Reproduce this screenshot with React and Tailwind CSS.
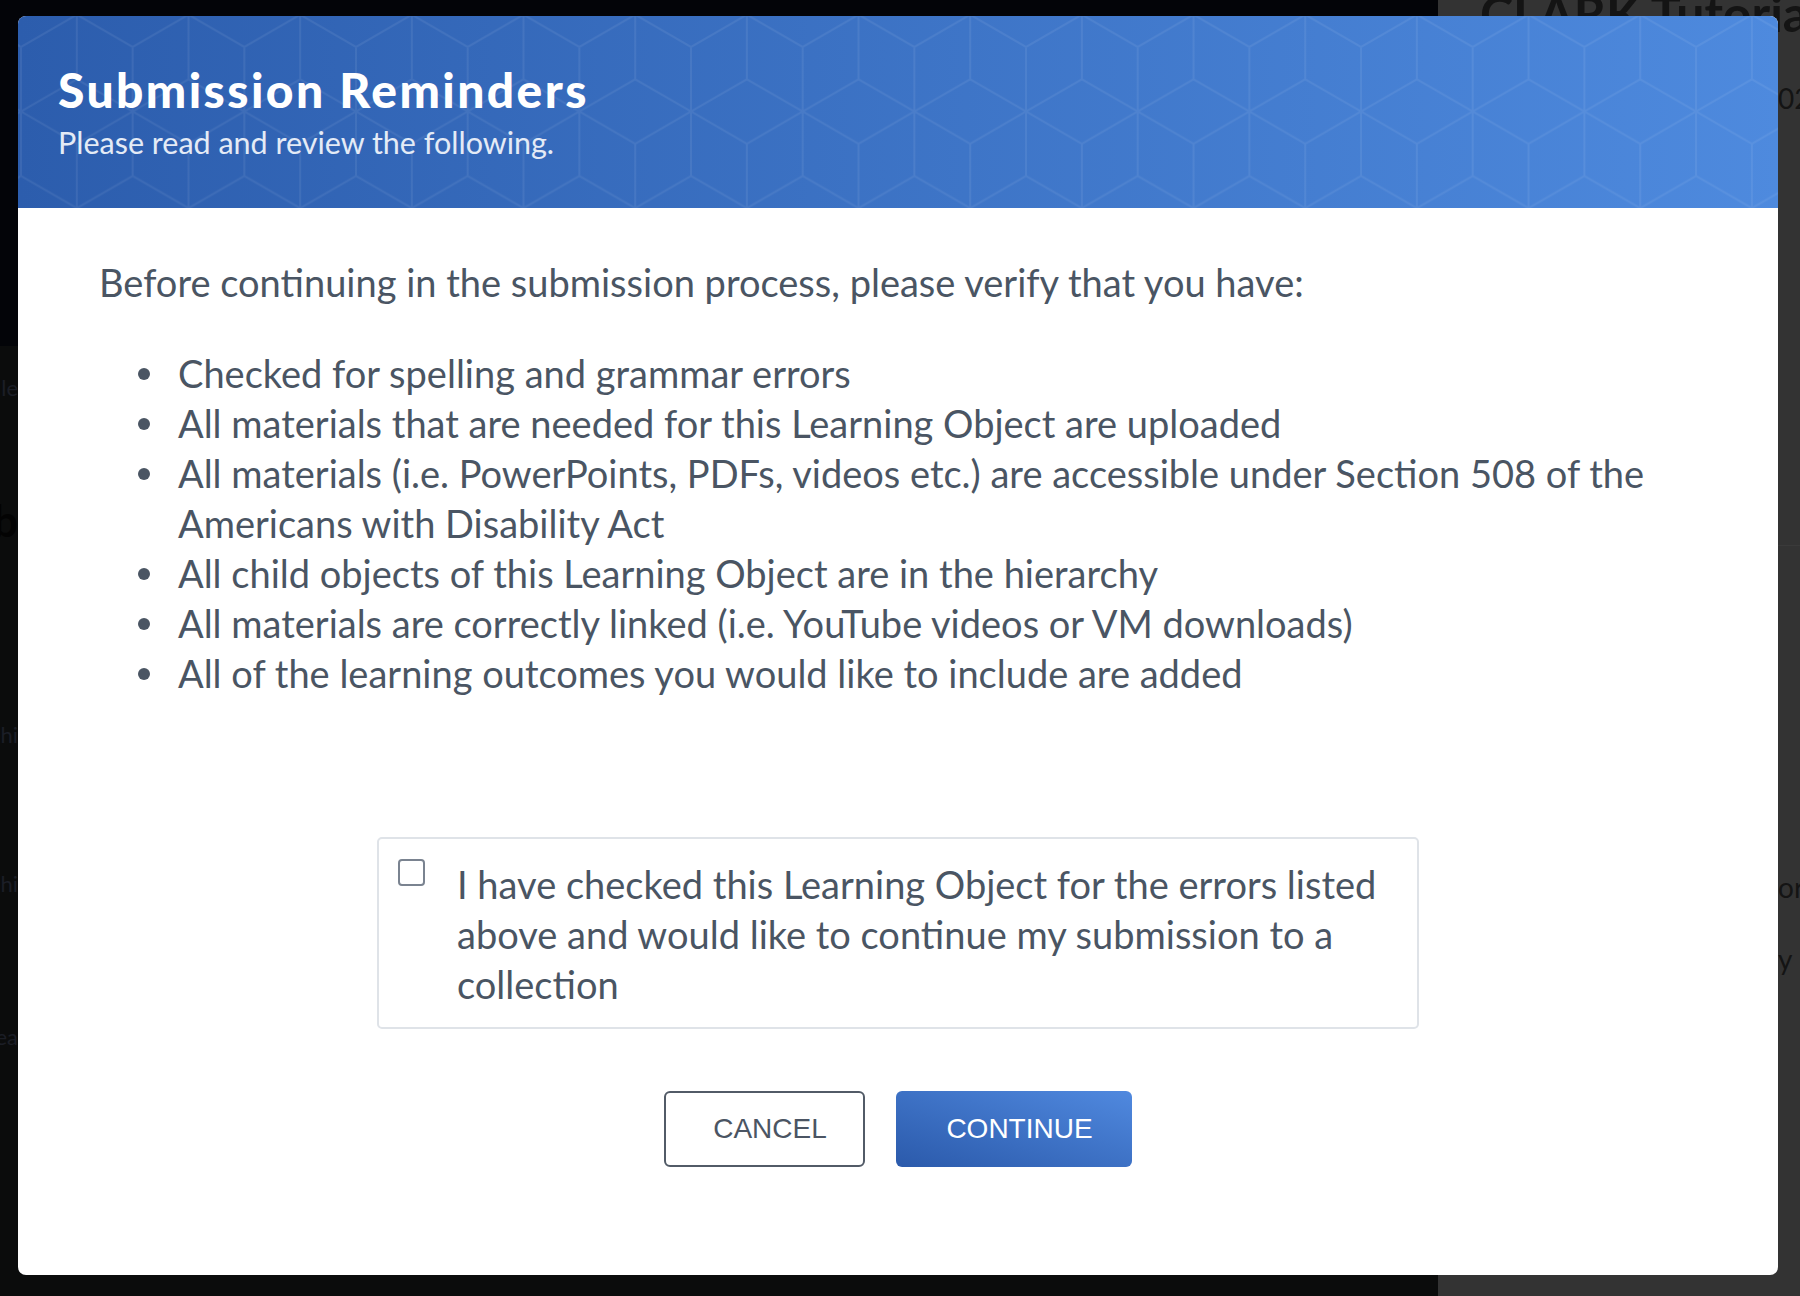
import React from 'react';

// hex "cube" pattern for the header
const W = 111.67;
const S = 64.47;
const centers = [[0, 0], [W, 0], [W / 2, 1.5 * S], [0, 3 * S], [W, 3 * S]];
const hexPath = centers
    .map(([cx, cy]) => {
        const h = W / 2;
        return `M${cx},${cy - S} L${cx + h},${cy - S / 2} L${cx + h},${cy + S / 2} L${cx},${cy + S} L${cx - h},${cy + S / 2} L${cx - h},${cy - S / 2} Z M${cx - h},${cy - S / 2} L${cx},${cy} L${cx + h},${cy - S / 2} M${cx},${cy} L${cx},${cy + S}`;
    })
    .join(' ');

const items = [
    'Checked for spelling and grammar errors',
    'All materials that are needed for this Learning Object are uploaded',
    'All materials (i.e. PowerPoints, PDFs, videos etc.) are accessible under Section 508 of the Americans with Disability Act',
    'All child objects of this Learning Object are in the hierarchy',
    'All materials are correctly linked (i.e. YouTube videos or VM downloads)',
    'All of the learning outcomes you would like to include are added',
];

const HeaderPattern = () => (
    <svg className="absolute inset-0 w-full h-full" aria-hidden="true">
        <defs>
            <pattern id="cubes" x="3" y="31" width={W} height={3 * S} patternUnits="userSpaceOnUse">
                <path d={hexPath} fill="none" stroke="#ffffff" strokeWidth="2" />
            </pattern>
        </defs>
        <rect width="100%" height="100%" fill="url(#cubes)" opacity="0.07" />
    </svg>
);

const App = () => {
    return (
        <div className="relative w-[1800px] h-[1296px] overflow-hidden flex font-['Lato',sans-serif]">
            {/* page behind the overlay */}
            <div className="flex-1 flex flex-col bg-[#0b0c0c]">
                <div className="h-[346px] bg-[#030408] shrink-0"></div>
                <div className="w-[18px] flex flex-col items-end text-[#1b1e26] whitespace-nowrap">
                    <span className="text-[22px] leading-[28px] mt-[28px]">le</span>
                    <span className="text-[44px] leading-[44px] font-bold mt-[96px] text-[#030303]">b</span>
                    <span className="text-[22px] leading-[28px] mt-[179px]">hi</span>
                    <span className="text-[22px] leading-[28px] mt-[121px]">hi</span>
                    <span className="text-[22px] leading-[28px] mt-[125px]">ea</span>
                </div>
            </div>
            <div className="w-[362px] bg-[#333333] flex flex-col text-[#141414] whitespace-nowrap">
                <div className="pl-[42px] -mt-[12px] text-[50px] font-bold leading-[50px]">CLARK Tutoria</div>
                <div className="pl-[340px] mt-[43px] text-[28px] leading-[34px]">02</div>
                <div className="h-[1px] bg-[#3a3a3a] mt-[430px]"></div>
                <div className="pl-[340px] mt-[324px] text-[28px] leading-[34px]">or</div>
                <div className="pl-[340px] mt-[38px] text-[28px] leading-[34px]">y</div>
            </div>

            {/* modal */}
            <div className="absolute left-[18px] top-[16px] w-[1760px] h-[1259px] bg-white rounded-[8px] overflow-hidden flex flex-col">
                <div className="relative h-[192px] shrink-0 bg-linear-to-r from-[#2c5dad] to-[#4e8ade] px-[40px] pt-[50px]">
                    <HeaderPattern />
                    <div className="relative">
                        <h1 className="text-[48px] leading-[48px] font-black tracking-[2.4px] text-white">Submission Reminders</h1>
                        <p className="mt-[11px] text-[30.5px] leading-[34px] text-[#e4ebf6]">Please read and review the following.</p>
                    </div>
                </div>

                <div className="flex-1 px-[81px] pt-[49px] text-[#4a5563]">
                    <p className="text-[38px] leading-[50px]">Before continuing in the submission process, please verify that you have:</p>
                    <ul className="mt-[41px] pl-[39px]">
                        {items.map((item) => (
                            <li key={item} className="flex text-[38px] leading-[50px]">
                                <span className="w-[12px] h-[12px] mt-[20px] rounded-full bg-[#4a5563] shrink-0"></span>
                                <span className="ml-[28px]">{item}</span>
                            </li>
                        ))}
                    </ul>

                    <div className="mt-[139px] mx-auto w-[1042px] h-[192px] border-2 border-[#dfe3e8] rounded-[5px] flex pl-[19px] pr-[20px] pt-[20px]">
                        <span className="w-[27px] h-[27px] shrink-0 border-2 border-[#7a8390] rounded-[4px] bg-white"></span>
                        <p className="ml-[32px] text-[38px] leading-[50px]">
                            I have checked this Learning Object for the errors listed above and would like to continue my submission to a collection
                        </p>
                    </div>

                    <div className="mt-[62px] flex justify-center gap-[31px] font-['Liberation_Sans',Arial,sans-serif] text-[28px]">
                        <button className="w-[201px] h-[76px] pl-[11px] border-2 border-[#525b67] rounded-[6px] text-[#4b5563] bg-white">CANCEL</button>
                        <button className="w-[236px] h-[76px] pl-[11px] rounded-[6px] text-white bg-linear-to-tr from-[#2b5aab] to-[#5089df]">CONTINUE</button>
                    </div>
                </div>
            </div>
        </div>
    );
};

export default App;
